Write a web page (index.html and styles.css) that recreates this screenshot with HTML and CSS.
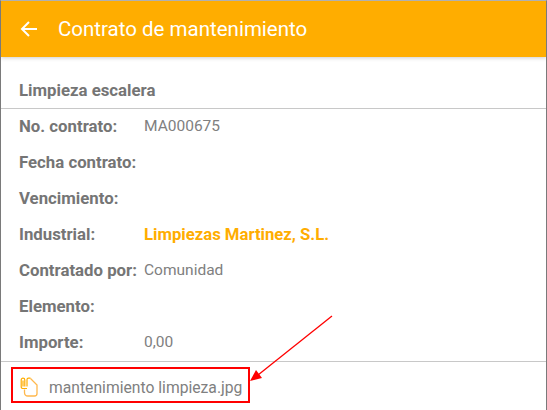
FILE: index.html
```html
<!DOCTYPE html>
<html>
  <head>
    <meta charset="utf-8" />
    <title>Contrato de mantenimiento</title>
    <link rel="stylesheet" href="styles.css">
  </head>
  <body>
    <div class="app">
      <div class="toolbar">
        <svg class="back-icon" width="20" height="20" viewBox="0 0 20 20">
          <path d="M18 10H3M10 3l-7 7 7 7" fill="none" stroke="#fff" stroke-width="2"/>
        </svg>
        <div class="toolbar-title">Contrato de mantenimiento</div>
      </div>

      <div class="content">
        <div class="title-row">Limpieza escalera</div>
        <div class="fields">
          <div class="field"><div class="label">No. contrato:</div><div class="value">MA000675</div></div>
          <div class="field"><div class="label">Fecha contrato:</div><div class="value"></div></div>
          <div class="field"><div class="label">Vencimiento:</div><div class="value"></div></div>
          <div class="field"><div class="label">Industrial:</div><div class="value link">Limpiezas Martinez, S.L.</div></div>
          <div class="field"><div class="label">Contratado por:</div><div class="value">Comunidad</div></div>
          <div class="field"><div class="label">Elemento:</div><div class="value"></div></div>
          <div class="field"><div class="label">Importe:</div><div class="value">0,00</div></div>
        </div>
        <div class="attachment">
          <svg class="clip-icon" width="18" height="20" viewBox="0 0 18 20">
            <path d="M10.500 1.500L17 8V16.500C17 18 16 19 14.500 19H8C6 19 4.500 17.500 4.500 15.500V12.500" fill="none" stroke="#ffb84d" stroke-width="1.300"/>
            <path d="M7 11.500H3C1.900 11.500 1.200 10.700 1.200 9.700V3C1.200 1.900 2 1.200 3 1.200S4.800 1.900 4.800 3V9.500M3 3.500V9.500M7 9.500V2.600C7 1.700 7.700 1.200 8.500 1.200H10.500" fill="none" stroke="#ffad00" stroke-width="1.200"/>
          </svg>
          <span class="file-name">mantenimiento limpieza.jpg</span>
        </div>
      </div>

      <!-- marca roja encima de la captura -->
      <div class="callout-box"></div>
      <svg class="callout-arrow" width="547" height="410" viewBox="0 0 547 410">
        <line x1="332" y1="316" x2="258" y2="375" stroke="#f00" stroke-width="1.300"/>
        <polygon points="250,381 256,370 262,378" fill="#f00"/>
      </svg>
    </div>
  </body>
</html>
```

FILE: styles.css
```css
* {
  box-sizing: border-box;
}

body {
  margin: 0;
  font-family: Roboto, sans-serif;
  background-color: #fff;
}

.app {
  position: relative;
  width: 547px;
  height: 410px;
  overflow: hidden;
  border-top: 1px solid #b0b0b0;
  border-left: 1px solid #7a7a7a;
  border-right: 1px solid #7a7a7a;
}

/* barra superior */
.toolbar {
  display: flex;
  align-items: center;
  height: 56px;
  padding-left: 18px;
  gap: 19px;
  background-color: #ffad00;
  color: #fff;
  box-shadow: 0 1px 4px rgba(0, 0, 0, 0.2);
}

.toolbar-title {
  font-size: 20.500px;
}

/* contenido */
.content {
  padding-top: 18px;
  color: #808080;
  font-size: 15.500px;
}

.title-row {
  height: 34px;
  line-height: 30px;
  padding-left: 18px;
  color: #757575;
  font-weight: 700;
  font-size: 16.800px;
  border-bottom: 1px solid #c8c8c8;
}

.fields {
  margin-top: -1px;
  padding: 0 0 0 18px;
  border-bottom: 1px solid #c8c8c8;
  height: 254px;
}

.field {
  display: flex;
  align-items: center;
  height: 36px;
}

.label {
  width: 125px;
  color: #757575;
  font-size: 16.800px;
  font-weight: 700;
  white-space: nowrap;
}

.link {
  color: #ffad00;
  font-size: 16.700px;
  font-weight: 700;
}

.attachment {
  display: flex;
  align-items: center;
  height: 50px;
  padding: 0 0 0 19px;
  gap: 11px;
}

.clip-icon {
  flex: none;
}

.file-name {
  font-size: 15.700px;
}

/* recuadro y flecha */
.callout-box {
  position: absolute;
  left: 10px;
  top: 366px;
  width: 239px;
  height: 36px;
  border: 2px solid #f00;
}

.callout-arrow {
  position: absolute;
  left: -1px;
  top: -1px;
}
```
